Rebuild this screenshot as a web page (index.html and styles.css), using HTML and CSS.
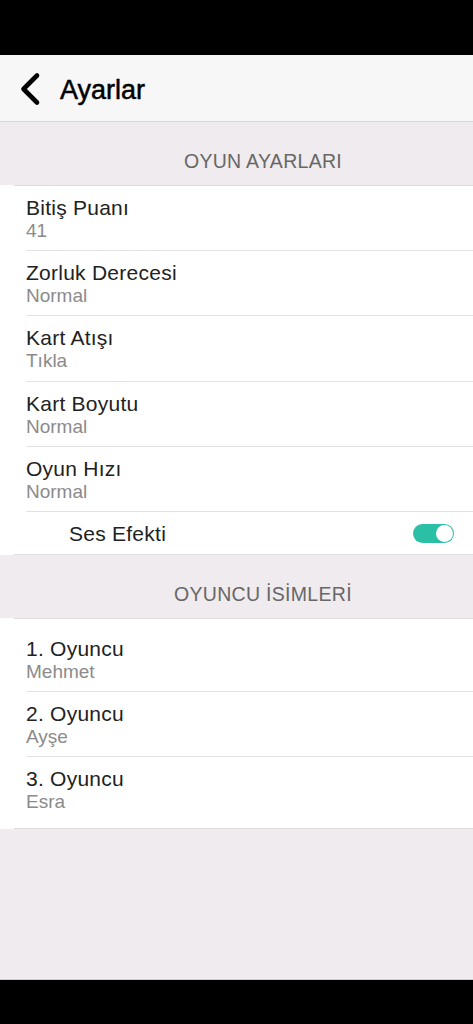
FILE: index.html
```html
<!DOCTYPE html>
<html lang="tr">
<head>
<meta charset="utf-8">
<title>Ayarlar</title>
<link rel="stylesheet" href="styles.css">
</head>
<body>
<div class="screen">
  <div class="statusbar"></div>
  <header class="navbar">
    <svg class="back" width="22" height="34" viewBox="0 0 22 34" aria-hidden="true">
      <path d="M18 3.5 L4.5 17 L18 30.5" fill="none" stroke="#000" stroke-width="4.6" stroke-linecap="round" stroke-linejoin="round"/>
    </svg>
    <h1 class="nav-title">Ayarlar</h1>
  </header>
  <main class="content">
    <div class="section-header">OYUN AYARLARI</div>
    <section class="group">
      <div class="group-rule"></div>
      <div class="row"><div class="row-title">Bitiş Puanı</div><div class="row-value">41</div></div>
      <div class="row"><div class="row-title">Zorluk Derecesi</div><div class="row-value">Normal</div></div>
      <div class="row"><div class="row-title">Kart Atışı</div><div class="row-value">Tıkla</div></div>
      <div class="row"><div class="row-title">Kart Boyutu</div><div class="row-value">Normal</div></div>
      <div class="row"><div class="row-title">Oyun Hızı</div><div class="row-value">Normal</div></div>
      <div class="switch-row">
        <span class="row-title">Ses Efekti</span>
        <span class="toggle"><span class="knob"></span></span>
      </div>
      <div class="group-rule"></div>
    </section>
    <div class="section-header">OYUNCU İSİMLERİ</div>
    <section class="group group-padded">
      <div class="group-rule"></div>
      <div class="group-body">
        <div class="row"><div class="row-title">1. Oyuncu</div><div class="row-value">Mehmet</div></div>
        <div class="row"><div class="row-title">2. Oyuncu</div><div class="row-value">Ayşe</div></div>
        <div class="row row-last"><div class="row-title">3. Oyuncu</div><div class="row-value">Esra</div></div>
      </div>
      <div class="group-rule"></div>
    </section>
    <div class="filler"></div>
  </main>
  <div class="homebar"></div>
</div>
</body>
</html>
```

FILE: styles.css
```css
html, body {
  margin: 0;
  padding: 0;
  background: #000;
}

.screen {
  width: 473px;
  height: 1024px;
  display: flex;
  flex-direction: column;
  font-family: "Liberation Sans", Arial, Helvetica, sans-serif;
  overflow: hidden;
}

.statusbar {
  height: 55px;
  background: #000;
  flex: none;
}

.navbar {
  height: 66px;
  flex: none;
  background: #f7f7f7;
  border-bottom: 1px solid #d6d6d6;
  display: flex;
  align-items: center;
  padding-left: 19px;
  box-sizing: content-box;
}

.back {
  display: block;
  margin-top: 2px;
}

.nav-title {
  margin: 0 0 0 19px;
  font-size: 27px;
  font-weight: normal;
  -webkit-text-stroke: 0.5px #000;
  color: #000;
  line-height: 30px;
  padding-top: 4px;
}

.content {
  flex: 1;
  display: flex;
  flex-direction: column;
  background: #efebee;
}

.section-header {
  height: 63px;
  box-sizing: border-box;
  padding: 27px 0 0 53px;
  text-align: center;
  font-size: 19.5px;
  letter-spacing: 0.3px;
  line-height: 24px;
  color: #676767;
  background: #efebee;
}

.group {
  background: #fff;
}

.group-rule {
  height: 1px;
  margin-left: 14px;
  background: #dedcdd;
}

.group-padded .group-body {
  padding: 8px 0 7px;
}

.row {
  margin-left: 26px;
  height: 65px;
  box-sizing: border-box;
  padding-top: 10px;
  border-bottom: 1px solid #e2e2e2;
}

.row:nth-child(n+3) {
  height: 65.3px;
}

.row-last {
  border-bottom: none;
  height: 64px;
}

.group-body .row {
  height: 65px;
}

.group-body .row-last {
  height: 64px;
}

.row-title {
  font-size: 21px;
  letter-spacing: 0.25px;
  line-height: 24px;
  color: #222;
}

.row-value {
  font-size: 19px;
  line-height: 22px;
  color: #8b8b8b;
}

.switch-row {
  height: 42px;
  box-sizing: border-box;
  padding: 0 19px 0 69px;
  display: flex;
  align-items: center;
  justify-content: space-between;
}

.switch-row .row-title {
  padding-top: 2px;
}

.toggle {
  width: 41px;
  height: 19px;
  box-sizing: border-box;
  border-radius: 10px;
  background: #2bbfa6;
  display: flex;
  align-items: center;
  justify-content: flex-end;
  padding: 1px;
}

.knob {
  width: 17px;
  height: 17px;
  border-radius: 50%;
  background: #fff;
}

.filler {
  flex: 1;
  border-bottom: 1px solid #cfcfcf;
}

.homebar {
  height: 44px;
  flex: none;
  background: #000;
}
```
